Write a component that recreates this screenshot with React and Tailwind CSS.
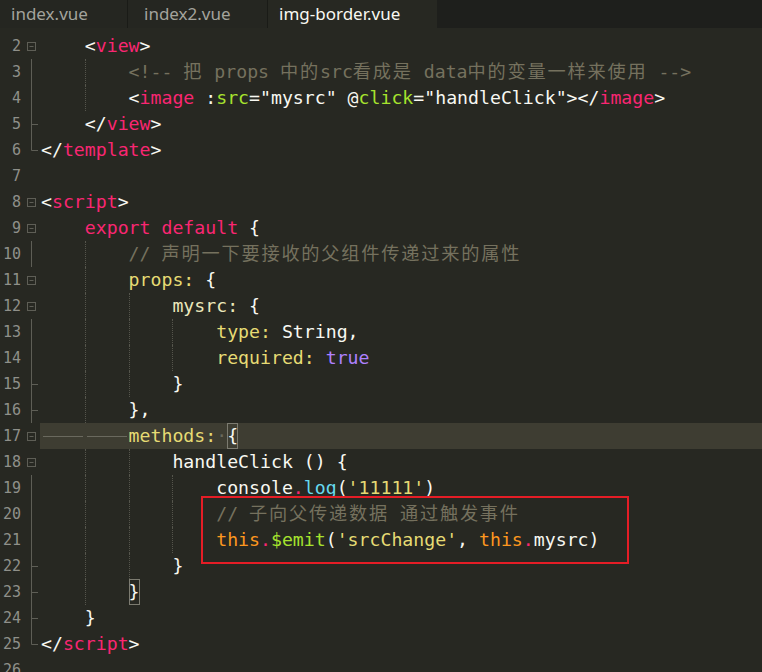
import React from "react";

const COLORS = {
  w: "text-[#f8f8f2]",
  p: "text-[#f92672]",
  g: "text-[#a6e22e]",
  y: "text-[#e6db74]",
  c: "text-[#75715e]",
  b: "text-[#66d9ef]",
  v: "text-[#ae81ff]",
  o: "text-[#fd971f]",
  k: "text-[#e6db74]",
  m: "text-[#ece8bc]",
};

const lines = [
  { n: 2, ind: 1, fold: "box", segs: [["<", "w"], ["view", "p"], [">", "w"]] },
  { n: 3, ind: 2, fold: "line", segs: [["<!-- 把 props 中的src看成是 data中的变量一样来使用 -->", "c"]] },
  {
    n: 4,
    ind: 2,
    fold: "line",
    segs: [
      ["<", "w"], ["image", "p"], [" :", "w"], ["src", "g"], ["=\"mysrc\" @", "w"], ["click", "g"],
      ["=\"handleClick\"></", "w"], ["image", "p"], [">", "w"],
    ],
  },
  { n: 5, ind: 1, fold: "tick", segs: [["</", "w"], ["view", "p"], [">", "w"]] },
  { n: 6, ind: 0, fold: "end", segs: [["</", "w"], ["template", "p"], [">", "w"]] },
  { n: 7, ind: 0, fold: "none", segs: [] },
  { n: 8, ind: 0, fold: "box", segs: [["<", "w"], ["script", "p"], [">", "w"]] },
  { n: 9, ind: 1, fold: "box", segs: [["export", "p"], [" ", "w"], ["default", "p"], [" {", "w"]] },
  { n: 10, ind: 2, fold: "line", segs: [["// 声明一下要接收的父组件传递过来的属性", "c"]] },
  { n: 11, ind: 2, fold: "box", segs: [["props:", "k"], [" {", "w"]] },
  { n: 12, ind: 3, fold: "box", segs: [["mysrc:", "m"], [" {", "w"]] },
  { n: 13, ind: 4, fold: "line", segs: [["type:", "k"], [" String,", "w"]] },
  { n: 14, ind: 4, fold: "line", segs: [["required:", "k"], [" ", "w"], ["true", "v"]] },
  { n: 15, ind: 3, fold: "tick", segs: [["}", "w"]] },
  { n: 16, ind: 2, fold: "tick", segs: [["},", "w"]] },
  { n: 17, ind: 2, fold: "box", hl: true, segs: [["methods:", "k"], ["DOT", "x"], ["{", "box"]] },
  { n: 18, ind: 3, fold: "box", segs: [["handleClick () {", "w"]] },
  {
    n: 19,
    ind: 4,
    fold: "line",
    segs: [["console", "w"], [".", "p"], ["log", "b"], ["(", "w"], ["'11111'", "y"], [")", "w"]],
  },
  { n: 20, ind: 4, fold: "line", segs: [["// 子向父传递数据 通过触发事件", "c"]] },
  {
    n: 21,
    ind: 4,
    fold: "line",
    segs: [
      ["this", "o"], [".", "p"], ["$emit", "g"], ["(", "w"], ["'srcChange'", "y"], [", ", "w"],
      ["this", "o"], [".", "p"], ["mysrc", "w"], [")", "w"],
    ],
  },
  { n: 22, ind: 3, fold: "tick", segs: [["}", "w"]] },
  { n: 23, ind: 2, fold: "tick", segs: [["}", "box"]] },
  { n: 24, ind: 1, fold: "tick", segs: [["}", "w"]] },
  { n: 25, ind: 0, fold: "end", segs: [["</", "w"], ["script", "p"], [">", "w"]] },
  { n: 26, ind: 0, fold: "none", segs: [] },
];

function FoldMark({ kind }) {
  const stroke = "#5e5e56";
  return (
    <svg width="19" height="26" viewBox="0 0 19 26" className="block">
      {kind === "box" && (
        <g>
          <rect x="6.5" y="9.5" width="8" height="8" fill="none" stroke={stroke} />
          <line x1="8.5" y1="13.5" x2="12.5" y2="13.5" stroke={stroke} />
        </g>
      )}
      {(kind === "line" || kind === "tick") && (
        <line x1="10.5" y1="0" x2="10.5" y2="26" stroke={stroke} />
      )}
      {kind === "tick" && <line x1="10.5" y1="13.5" x2="17" y2="13.5" stroke={stroke} />}
      {kind === "end" && (
        <g>
          <line x1="10.5" y1="0" x2="10.5" y2="13.5" stroke={stroke} />
          <line x1="10.5" y1="13.5" x2="17" y2="13.5" stroke={stroke} />
        </g>
      )}
    </svg>
  );
}

function renderText(text, key) {
  const parts = text.split(/([\u3400-\u9fff]+)/);
  return parts.map((part, i) =>
    /[\u3400-\u9fff]/.test(part) ? (
      <span key={key + "-" + i} className="tracking-[1.8px]">
        {part}
      </span>
    ) : (
      <React.Fragment key={key + "-" + i}>{part}</React.Fragment>
    )
  );
}

function Seg({ seg, idx }) {
  const [text, color] = seg;
  if (color === "x") {
    return <span className="inline-block w-[1ch] text-center text-[#6a695c]">·</span>;
  }
  if (color === "box") {
    return (
      <span className="inline-block h-[26px] w-[1ch] text-[#f8f8f2] shadow-[inset_0_0_0_1px_#7c7b70]">
        {text}
      </span>
    );
  }
  return <span className={COLORS[color]}>{renderText(text, idx)}</span>;
}

function CodeLine({ line }) {
  const units = [];
  for (let i = 0; i < line.ind; i++) {
    if (line.hl) {
      units.push(
        <span key={i} className="flex h-[26px] w-[4ch] shrink-0 items-center px-[2px]">
          <span className="block h-px w-full bg-[#6a695e]" />
        </span>
      );
    } else {
      units.push(
        <span
          key={i}
          className={
            i >= 1
              ? "block h-[26px] w-[4ch] shrink-0 border-l border-dotted border-[#55554c]"
              : "block h-[26px] w-[4ch] shrink-0"
          }
        />
      );
    }
  }
  return (
    <div className="flex h-[26px]">
      <div className="flex h-[26px] w-[40px] shrink-0">
        <div className="w-[21px] text-right font-['DejaVu_Sans_Mono',monospace] text-[15px] leading-[26px] text-[#8f908a]">
          {line.n}
        </div>
        <FoldMark kind={line.fold} />
      </div>
      <div
        className={
          "flex h-[26px] flex-1 whitespace-pre pl-[1px] leading-[26px] " +
          (line.hl ? "bg-[#3e3d32]" : "")
        }
      >
        {units}
        <span className="whitespace-pre">
          {line.segs.map((s, i) => (
            <Seg key={i} seg={s} idx={i} />
          ))}
        </span>
      </div>
    </div>
  );
}

export default function App() {
  return (
    <div className="h-[672px] w-[762px] overflow-hidden bg-[#272822]">
      <div className="flex h-[28px] bg-[#1e1f1c] font-['Noto_Sans',sans-serif] text-[17px]">
        <div className="flex w-[128px] items-center border-r border-[#1a1b17] bg-[#252621] pl-[11px] text-[#a3a39c]">
          index.vue
        </div>
        <div className="flex w-[140px] items-center border-r border-[#1a1b17] bg-[#252621] pl-[16px] text-[#a3a39c]">
          index2.vue
        </div>
        <div className="flex w-[169px] items-center bg-[#272822] pl-[11px] text-[#f8f8f2]">
          img-border.vue
        </div>
      </div>
      <div className="relative pt-[5px] font-['DejaVu_Sans_Mono','Noto_Sans_CJK_SC',monospace] text-[18.2px]">
        {lines.map((l) => (
          <CodeLine key={l.n} line={l} />
        ))}
        <div className="absolute left-[201px] top-[468px] h-[68px] w-[428px] border-2 border-[#e51d26]" />
      </div>
    </div>
  );
}
